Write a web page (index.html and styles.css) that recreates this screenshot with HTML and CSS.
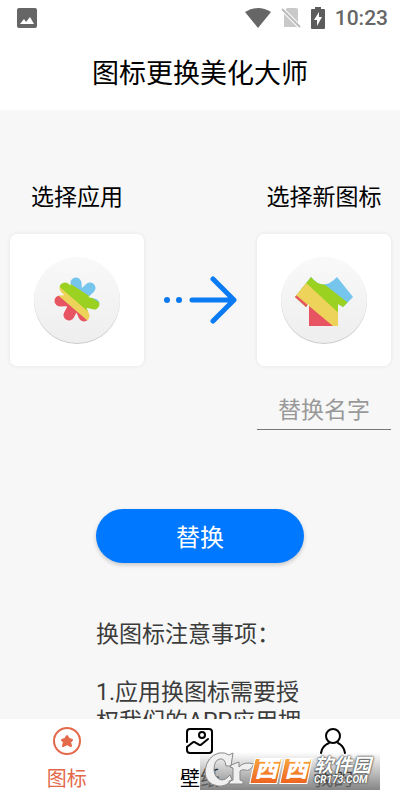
FILE: index.html
```
<!DOCTYPE html>
<html lang="zh-CN">
<head>
  <meta charset="UTF-8" />
  <meta name="viewport" content="width=device-width, initial-scale=1.0"/>
  <title>图标更换美化大师</title>
  <link rel="stylesheet" href="styles.css">
</head>
<body>
  <header>
    <div class="status-bar">
      <svg class="status-photo" width="20" height="20" viewBox="0 0 20 20">
        <rect width="20" height="20" rx="2" fill="#666"/>
        <path d="M3 16l4-5 2 3 4-5 4 7z" fill="#fff"/>
      </svg>
      <svg width="26" height="20" viewBox="0 0 26 20">
        <path d="M0 4Q13-4 26 4L13 20z" fill="#666"/>
      </svg>
      <svg width="20" height="20" viewBox="0 0 20 20">
        <path d="M6 0h9q2 0 2 2v17H3V4z" fill="#c9c9c9"/>
        <path d="M0 0l18 18" stroke="#fff" stroke-width="4"/>
        <path d="M1 1l18 18" stroke="#bbb" stroke-width="2"/>
      </svg>
      <svg width="14" height="22" viewBox="0 0 14 22">
        <path d="M4 0h6v2h3q1 0 1 1v18q0 1-1 1H1q-1 0-1-1V3q0-1 1-1h3z" fill="#5c5c5c"/>
        <path d="M8 5l-5 8h3v6l5-9H8z" fill="#fff"/>
      </svg>
      <span class="clock">10:23</span>
    </div>
    <h1>图标更换美化大师</h1>
  </header>

  <main>
    <div class="picker">
      <div class="pick">
        <h2>选择应用</h2>
        <button class="card" type="button" aria-label="选择应用">
          <svg width="92" height="92" viewBox="0 0 92 92">
            <defs>
              <linearGradient id="disc" x2="0" y2="1">
                <stop offset="0" stop-color="#f9f9f9"/>
                <stop offset="1" stop-color="#eeeeee"/>
              </linearGradient>
              <mask id="flower">
                <path d="M46 46L45 29M46 46L59 34M46 46L63 50M46 46L34 34M46 46L29 47M46 46L38 61M46 46L53 62" stroke="#fff" stroke-width="11" stroke-linecap="round"/>
                <circle cx="46" cy="46" r="12" fill="#fff"/>
              </mask>
            </defs>
            <circle cx="46" cy="47" r="43" fill="#ccc"/>
            <circle cx="46" cy="46" r="43" fill="url(#disc)"/>
            <g mask="url(#flower)">
              <path d="M0 0h92v92H0z" fill="#75c5ed"/>
              <path d="M0 4L92 64V92H0z" fill="#9bd222"/>
              <path d="M0 8L92 88V92H0z" fill="#edd35a"/>
              <path d="M0 18L86 92H0z" fill="#e75462"/>
            </g>
          </svg>
        </button>
      </div>

      <svg class="arrow" width="74" height="48" viewBox="0 0 74 48">
        <circle cx="3" cy="24" r="3" fill="#0a78ee"/>
        <circle cx="15" cy="24" r="3" fill="#0a78ee"/>
        <path d="M28 24h41M49 3l21 21l-21 21" fill="none" stroke="#0a7af5" stroke-width="5" stroke-linecap="round" stroke-linejoin="round"/>
      </svg>

      <div class="pick">
        <h2>选择新图标</h2>
        <button class="card" type="button" aria-label="选择新图标">
          <svg width="92" height="92" viewBox="0 0 92 92">
            <clipPath id="shirt">
              <path d="M33 23Q45 38 59 23L75 43L65 53L60 50V72H31V49L28 53L17 43z"/>
            </clipPath>
            <circle cx="46" cy="47" r="43" fill="#ccc"/>
            <circle cx="46" cy="46" r="43" fill="url(#disc)"/>
            <g clip-path="url(#shirt)">
              <path d="M0 0h92v92H0z" fill="#75c5ed"/>
              <path d="M0 -6L92 66V92H0z" fill="#9bd222"/>
              <path d="M0 3L92 88V92H0z" fill="#edd35a"/>
              <path d="M0 26L80 93H0z" fill="#e75462"/>
            </g>
          </svg>
        </button>
        <input class="new-name" type="text" placeholder="替换名字" aria-label="替换名字">
      </div>
    </div>

    <button class="btn-replace" type="button">替换</button>

    <div class="notes">
      <p>换图标注意事项：</p>
      <p>1.应用换图标需要授权我们的APP应用拥有</p>
    </div>
  </main>

  <nav>
    <a href="#icons" class="active">
      <svg width="30" height="30" viewBox="0 0 30 30">
        <circle cx="15" cy="15" r="13" fill="none" stroke="currentColor" stroke-width="2"/>
        <path d="M15 10l2 3 3 1-2 2 1 4-4-2-4 2 1-4-2-2 3-1z" fill="currentColor" stroke="currentColor" stroke-width="2" stroke-linejoin="round"/>
      </svg>
      图标
    </a>
    <a href="#wallpaper">
      <svg width="30" height="30" viewBox="0 0 30 30" fill="none" stroke="currentColor" stroke-width="2" stroke-linecap="round">
        <path d="M2 16V6q0-3 3-3h19q3 0 3 3v18q0 3-3 3H5q-3 0-3-3v-3l5-4q2-2 4 0l2 1q2 2 4 0l6-5"/>
        <circle cx="17" cy="9" r="3"/>
      </svg>
      壁纸
    </a>
    <a href="#mine">
      <svg width="30" height="30" viewBox="0 0 30 30" fill="none" stroke="currentColor" stroke-width="2" stroke-linecap="round">
        <circle cx="15" cy="10" r="7"/>
        <path d="M3 27q1-7 8-10M20 17q6 3 7 10"/>
      </svg>
      我的
    </a>
  </nav>

  <div class="watermark">
    <svg class="wm-logo" width="50" height="38" viewBox="0 0 50 38" stroke-linejoin="round">
      <path d="M33 1L31 14H26Q25 6 20 7Q14 8 14 18Q15 27 22 28Q26 28 30 23L32 28Q26 35 18 34Q5 32 5 19Q7 4 19 1Q25 0 29 3zM31 13L39 10V15Q44 9 54 12Q50 20 45 18Q42 17 40 19V28L43 29V32H29V29L33 28V16L30 15z" fill="#f0f0f0" stroke="#888"/>
    </svg>
    <span class="wm-tile">西</span>
    <span class="wm-tile">西</span>
    <span class="wm-name">软件园<small>CR173.COM</small></span>
  </div>
</body>
</html>
```
FILE: styles.css
```
* {
  margin: 0;
  padding: 0;
  box-sizing: border-box;
  font-family: Roboto, 'Noto Sans CJK SC', sans-serif;
}

body {
  background: #f7f7f7;
  height: 100vh;
  display: flex;
  flex-direction: column;
  position: relative;
  overflow: hidden;
}

header {
  background: white;
}

.status-bar {
  height: 36px;
  padding: 0 12px 0 17px;
  display: flex;
  align-items: center;
  gap: 10px;
}

.status-photo {
  margin-right: auto;
}

.clock {
  font-size: 21px;
  line-height: 38px;
  font-weight: 500;
  color: #666;
}

h1 {
  height: 74px;
  font-size: 27px;
  line-height: 76px;
  font-weight: 400;
  text-align: center;
}

main {
  flex: 1;
  min-height: 0;
  padding-top: 70px;
  overflow: hidden;
}

.picker {
  display: flex;
  justify-content: space-between;
  align-items: flex-start;
  padding: 0 9px 0 10px;
}

.pick {
  width: 134px;
}

h2 {
  font-size: 23px;
  line-height: 36px;
  font-weight: 400;
  text-align: center;
  margin-bottom: 18px;
}

.card {
  width: 134px;
  height: 132px;
  display: flex;
  align-items: center;
  justify-content: center;
  background: white;
  border: none;
  border-radius: 7px;
  box-shadow: 0 0 4px rgba(0,0,0,0.08);
}

.arrow {
  margin-top: 96px;
}

.new-name {
  display: block;
  width: 100%;
  height: 42px;
  margin-top: 22px;
  padding-top: 4px;
  border: none;
  border-bottom: 1px solid #777;
  background: none;
  font-size: 23px;
  text-align: center;
}

.new-name::placeholder {
  color: #999;
}

.btn-replace {
  display: block;
  width: 208px;
  height: 54px;
  margin: 79px auto 0;
  padding-bottom: 1px;
  border: none;
  border-radius: 27px;
  background: #0078ff;
  color: white;
  font-size: 24px;
  box-shadow: 0 2px 4px rgba(0,0,0,0.2);
}

.notes {
  width: 208px;
  margin: 57px auto 0;
  font-size: 23px;
  line-height: 29px;
  color: #3c3c3c;
}

.notes p {
  margin-bottom: 29px;
}

nav {
  height: 81px;
  padding-top: 7px;
  background: white;
  display: flex;
}

nav a {
  flex: 1;
  display: flex;
  flex-direction: column;
  align-items: center;
  gap: 8px;
  color: black;
  font-size: 20px;
  line-height: 30px;
  text-decoration: none;
}

nav a.active {
  color: #e4694b;
}

/* download site badge over the tab bar */
.watermark {
  position: absolute;
  right: 20px;
  bottom: 10px;
  width: 180px;
  height: 38px;
  display: flex;
  align-items: center;
  background: linear-gradient(rgba(120,120,120,0), rgba(120,120,120,0.9));
}

.wm-logo {
  flex: none;
  overflow: visible;
}

.wm-tile {
  width: 28px;
  height: 26px;
  margin-left: 2px;
  flex: none;
  position: relative;
  z-index: 0;
  color: white;
  font-size: 23px;
  line-height: 24px;
  font-weight: 900;
  font-style: italic;
  text-align: center;
}

.wm-tile::before {
  content: '';
  position: absolute;
  inset: 0;
  z-index: -1;
  border: 1px solid white;
  background: linear-gradient(#f9a43a, #ee6420);
  transform: skewX(-12deg);
}

.wm-name {
  display: flex;
  flex-direction: column;
  padding-left: 4px;
  color: white;
  font-size: 19px;
  line-height: 18px;
  font-weight: 700;
  font-style: italic;
  white-space: nowrap;
  text-shadow: 0 0 2px #444, 0 0 2px #444;
}

.wm-name small {
  font-size: 10px;
  line-height: 10px;
}
```
